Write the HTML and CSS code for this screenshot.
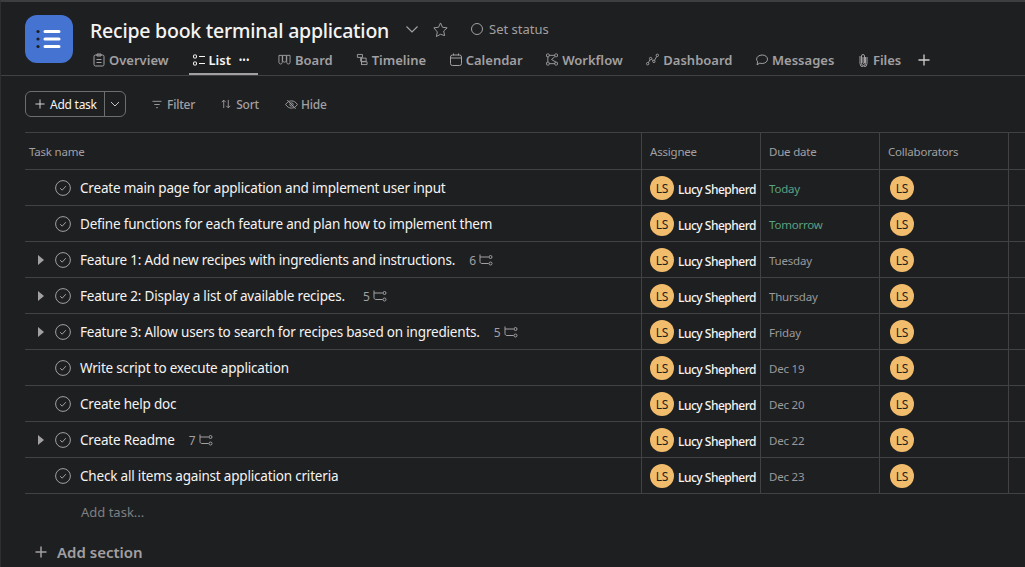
FILE: index.html
```html
<!DOCTYPE html>
<html lang="en">
  <head>
    <meta charset="UTF-8" />
    <meta name="viewport" content="width=device-width, initial-scale=1" />
    <title>Recipe book terminal application</title>
    <link rel="stylesheet" href="styles.css">
  </head>
  <body>
    <svg class="sprites" width="0" height="0" aria-hidden="true">
      <symbol id="i-check" viewBox="0 0 16 16"><circle cx="8" cy="8" r="7.4"/><path d="M5.2 8.2l2 2 3.6-4"/></symbol>
      <symbol id="i-sub" viewBox="0 0 14 12"><path d="M1 .5v7c0 1.300.8 2 2 2h6.600M1 3h8.600"/><circle cx="11.500" cy="3" r="1.500"/><circle cx="11.500" cy="9.500" r="1.500"/></symbol>
      <symbol id="i-plus" viewBox="0 0 12 12"><path d="M6 .5v11M.5 6h11"/></symbol>
    </svg>

    <header class="header">
      <div class="app-icon">
        <svg viewBox="0 0 48 48" width="48" height="48">
          <circle cx="13" cy="16.500" r="1.600" fill="#1e1f21"/>
          <circle cx="13" cy="24" r="1.600" fill="#1e1f21"/>
          <circle cx="13" cy="31.500" r="1.600" fill="#1e1f21"/>
          <path d="M20 16.500h14M20 24h14M20 31.500h14" stroke="#fff" stroke-width="3" stroke-linecap="round"/>
        </svg>
      </div>
      <div class="header-main">
        <div class="title-row">
          <h1 class="title">Recipe book terminal application</h1>
          <svg class="chev" viewBox="0 0 12 7" width="12" height="7"><path d="M.5.5L6 6l5.500-5.500"/></svg>
          <svg class="star" viewBox="0 0 16 16" width="15" height="15"><path d="M8 1l2.100 4.600 5 .6-3.700 3.400 1 4.900L8 13.100l-4.400 2.400 1-4.900L.9 6.200l5-.6z"/></svg>
          <span class="status"><i class="status-dot"></i>Set status</span>
        </div>
        <nav class="tabs">
          <a class="tab">
            <svg viewBox="0 0 12 14" width="12" height="14"><rect x="1" y="2" width="10" height="11" rx="1.500"/><path d="M4 1h4v2H4zM3.500 6.500h5M3.500 9.500h5"/></svg>
            Overview
          </a>
          <a class="tab tab-active">
            <svg viewBox="0 0 12 12" width="12" height="12"><rect x=".5" y="1" width="3" height="3" rx=".5"/><rect x=".5" y="8" width="3" height="3" rx=".5"/><path d="M6 2.500h6M6 9.500h6"/></svg>
            List
            <span class="tab-dots">&bull;&bull;&bull;</span>
          </a>
          <a class="tab tab-board">
            <svg viewBox="0 0 14 12" width="13" height="12"><path d="M1 1h3.600v7.500c0 1-.8 1.800-1.800 1.800S1 9.500 1 8.500zM5 1h4v5.500c0 1-.9 1.800-2 1.800S5 7.500 5 6.500zM9.400 1H13v7.500c0 1-.8 1.800-1.800 1.800s-1.800-.8-1.800-1.800z"/></svg>
            Board
          </a>
          <a class="tab">
            <svg viewBox="0 0 13 13" width="12" height="13"><path d="M1.500 1H7v3.200H1.500zM6 4.500v8M5 5h6v3.500H5zM6 9h6v3H6z"/></svg>
            Timeline
          </a>
          <a class="tab">
            <svg viewBox="0 0 12 13" width="12" height="13"><rect x=".5" y="2" width="11" height="10.500" rx="2"/><path d="M.5 5h11M3.500 .5v2M8.500 .5v2"/></svg>
            Calendar
          </a>
          <a class="tab">
            <svg viewBox="0 0 13 13" width="12" height="13"><rect x=".5" y=".5" width="3" height="3" rx=".8"/><rect x="9.500" y=".5" width="3" height="3" rx=".8"/><rect x=".5" y="9.500" width="3" height="3" rx=".8"/><rect x="9.500" y="9.500" width="3" height="3" rx=".8"/><path d="M3.500 2h6M2 3.500v6M3.500 11h6M9.500 3.500L6 6.500l5 3"/></svg>
            Workflow
          </a>
          <a class="tab">
            <svg viewBox="0 0 14 13" width="13" height="13"><circle cx="1.800" cy="11" r="1.300"/><circle cx="5" cy="5.500" r="1.300"/><circle cx="8.500" cy="8.500" r="1.300"/><circle cx="12.200" cy="2" r="1.300"/><path d="M2.500 10L4.400 6.600M6 6.400l1.500 1.300M9.200 7.400l2.400-4.300"/></svg>
            Dashboard
          </a>
          <a class="tab">
            <svg viewBox="0 0 12 12" width="12" height="12"><path d="M6.200 1C9.200 1 11.500 2.800 11.500 5.200S9.200 9.500 6.200 9.500c-.9 0-1.700-.2-2.400-.4L1 10.800l.7-3C1 7 .6 6.100.6 5.200.6 2.800 3.100 1 6.200 1z"/></svg>
            Messages
          </a>
          <a class="tab">
            <svg class="clip" viewBox="0 0 9 14" width="11" height="14"><path d="M6.500 4v6.500a2 2 0 0 1-4 0V3a1.500 1.500 0 0 1 3 0v7a.8.8 0 0 1-1.500 0V4M8 4v6.500a3.500 3.500 0 0 1-7 0V3"/></svg>
            Files
          </a>
          <svg class="tab-plus"><use href="#i-plus"/></svg>
        </nav>
      </div>
    </header>

    <div class="toolbar">
      <div class="split-btn">
        <span class="split-main"><svg class="plus-sm"><use href="#i-plus"/></svg>Add task</span>
        <span class="split-arrow"><svg viewBox="0 0 10 6" width="10" height="6"><path d="M1 1l4 4 4-4"/></svg></span>
      </div>
      <div class="tools">
        <span class="tool"><svg viewBox="0 0 11 9" width="10" height="9"><path d="M.5 1h10M2.500 4.500h6M4.500 8h2"/></svg>Filter</span>
        <span class="tool"><svg viewBox="0 0 11 10" width="10" height="10"><path d="M3 9.500V.8M.8 3L3 .8 5.200 3M8 .5v8.700M5.800 7L8 9.200 10.200 7"/></svg>Sort</span>
        <span class="tool tool-tight"><svg viewBox="0 0 14 11" width="13" height="11"><path d="M.7 5.500C2.200 3 4.400 1.600 7 1.600s4.800 1.400 6.300 3.900C11.800 8 9.600 9.400 7 9.400S2.200 8 .7 5.500zM2.500 .7l9 9.600"/><circle cx="7" cy="5.500" r="1.800"/></svg>Hide</span>
      </div>
    </div>

    <section class="task-table">
      <div class="row row-head">
        <div class="cell cell-name">Task name</div>
        <div class="cell">Assignee</div>
        <div class="cell">Due date</div>
        <div class="cell">Collaborators</div>
        <div class="cell"></div>
      </div>

      <div class="row">
        <div class="cell cell-name">
          <span class="caret-slot"></span>
          <svg class="check"><use href="#i-check"/></svg>
          <span class="task-title">Create main page for application and implement user input</span>
        </div>
        <div class="cell"><span class="avatar">LS</span><span class="person">Lucy Shepherd</span></div>
        <div class="cell due due-soon">Today</div>
        <div class="cell cell-collab"><span class="avatar">LS</span></div>
        <div class="cell"></div>
      </div>

      <div class="row">
        <div class="cell cell-name">
          <span class="caret-slot"></span>
          <svg class="check"><use href="#i-check"/></svg>
          <span class="task-title">Define functions for each feature and plan how to implement them</span>
        </div>
        <div class="cell"><span class="avatar">LS</span><span class="person">Lucy Shepherd</span></div>
        <div class="cell due due-soon">Tomorrow</div>
        <div class="cell cell-collab"><span class="avatar">LS</span></div>
        <div class="cell"></div>
      </div>

      <div class="row">
        <div class="cell cell-name">
          <span class="caret-slot"><i class="caret"></i></span>
          <svg class="check"><use href="#i-check"/></svg>
          <span class="task-title">Feature 1: Add new recipes with ingredients and instructions.</span>
          <span class="sub-count">6<svg class="sub-icon"><use href="#i-sub"/></svg></span>
        </div>
        <div class="cell"><span class="avatar">LS</span><span class="person">Lucy Shepherd</span></div>
        <div class="cell due">Tuesday</div>
        <div class="cell cell-collab"><span class="avatar">LS</span></div>
        <div class="cell"></div>
      </div>

      <div class="row">
        <div class="cell cell-name">
          <span class="caret-slot"><i class="caret"></i></span>
          <svg class="check"><use href="#i-check"/></svg>
          <span class="task-title">Feature 2: Display a list of available recipes.</span>
          <span class="sub-count sub-count-wide">5<svg class="sub-icon"><use href="#i-sub"/></svg></span>
        </div>
        <div class="cell"><span class="avatar">LS</span><span class="person">Lucy Shepherd</span></div>
        <div class="cell due">Thursday</div>
        <div class="cell cell-collab"><span class="avatar">LS</span></div>
        <div class="cell"></div>
      </div>

      <div class="row">
        <div class="cell cell-name">
          <span class="caret-slot"><i class="caret"></i></span>
          <svg class="check"><use href="#i-check"/></svg>
          <span class="task-title">Feature 3: Allow users to search for recipes based on ingredients.</span>
          <span class="sub-count">5<svg class="sub-icon"><use href="#i-sub"/></svg></span>
        </div>
        <div class="cell"><span class="avatar">LS</span><span class="person">Lucy Shepherd</span></div>
        <div class="cell due">Friday</div>
        <div class="cell cell-collab"><span class="avatar">LS</span></div>
        <div class="cell"></div>
      </div>

      <div class="row">
        <div class="cell cell-name">
          <span class="caret-slot"></span>
          <svg class="check"><use href="#i-check"/></svg>
          <span class="task-title">Write script to execute application</span>
        </div>
        <div class="cell"><span class="avatar">LS</span><span class="person">Lucy Shepherd</span></div>
        <div class="cell due">Dec 19</div>
        <div class="cell cell-collab"><span class="avatar">LS</span></div>
        <div class="cell"></div>
      </div>

      <div class="row">
        <div class="cell cell-name">
          <span class="caret-slot"></span>
          <svg class="check"><use href="#i-check"/></svg>
          <span class="task-title">Create help doc</span>
        </div>
        <div class="cell"><span class="avatar">LS</span><span class="person">Lucy Shepherd</span></div>
        <div class="cell due">Dec 20</div>
        <div class="cell cell-collab"><span class="avatar">LS</span></div>
        <div class="cell"></div>
      </div>

      <div class="row">
        <div class="cell cell-name">
          <span class="caret-slot"><i class="caret"></i></span>
          <svg class="check"><use href="#i-check"/></svg>
          <span class="task-title">Create Readme</span>
          <span class="sub-count">7<svg class="sub-icon"><use href="#i-sub"/></svg></span>
        </div>
        <div class="cell"><span class="avatar">LS</span><span class="person">Lucy Shepherd</span></div>
        <div class="cell due">Dec 22</div>
        <div class="cell cell-collab"><span class="avatar">LS</span></div>
        <div class="cell"></div>
      </div>

      <div class="row">
        <div class="cell cell-name">
          <span class="caret-slot"></span>
          <svg class="check"><use href="#i-check"/></svg>
          <span class="task-title">Check all items against application criteria</span>
        </div>
        <div class="cell"><span class="avatar">LS</span><span class="person">Lucy Shepherd</span></div>
        <div class="cell due">Dec 23</div>
        <div class="cell cell-collab"><span class="avatar">LS</span></div>
        <div class="cell"></div>
      </div>
    </section>

    <div class="add-task">Add task...</div>
    <div class="add-section"><svg class="plus-lg"><use href="#i-plus"/></svg>Add section</div>
  </body>
</html>
```

FILE: styles.css
```css
* {
  box-sizing: border-box;
}
html,
body {
  height: 100%;
}
body {
  margin: 0;
  background: #1e1f21;
  border-top: 2px solid #3d3e40;
  border-left: 1px solid #2e2f31;
  color: #f5f4f3;
  font-family: "Noto Sans", "Open Sans", sans-serif;
  overflow: hidden;
}
svg {
  fill: none;
  stroke: currentColor;
  stroke-width: 1;
  flex: none;
}
.sprites {
  display: block;
}

/* header */
.header {
  display: flex;
  height: 74px;
  padding: 13px 0 0 24px;
  border-bottom: 1px solid #424244;
}
.app-icon {
  width: 48px;
  height: 48px;
  border-radius: 12px;
  background: #4573d2;
}
.app-icon svg {
  stroke: none;
}
.header-main {
  margin-left: 17px;
}
.title-row {
  display: flex;
  align-items: center;
  height: 32px;
}
.title {
  margin: -2px 0 0;
  font-size: 19.5px;
  font-weight: 500;
  letter-spacing: -0.23px;
  color: #f5f4f3;
}
.chev {
  margin: 0 0 4px 17px;
  color: #a2a0a2;
  stroke-width: 1.2;
}
.star {
  margin: 0 0 4px 15px;
  color: #a2a0a2;
}
.status {
  display: flex;
  align-items: center;
  margin: 0 0 4px 23px;
  font-size: 13px;
  color: #a2a0a2;
}
.status-dot {
  width: 12px;
  height: 12px;
  margin-right: 6px;
  border: 1px solid #a2a0a2;
  border-radius: 50%;
}
.tabs {
  display: flex;
  height: 28px;
  padding-left: 3px;
  font-size: 13px;
  font-weight: 600;
  color: #a2a0a2;
}
.tab {
  display: flex;
  align-items: center;
  gap: 4px;
  height: 28px;
  padding-bottom: 3px;
  margin-right: 23.6px;
}
.tab-active {
  margin: 0 20px 0 -3.6px;
  padding: 0 7px 1px 4px;
  border-bottom: 2px solid #a2a0a2;
  color: #f5f4f3;
}
.tab-board {
  margin-right: 23px;
}
.tab-dots {
  width: 12px;
  margin-left: 4px;
  font-size: 8px;
  letter-spacing: 0.6px;
  white-space: nowrap;
}
.tab-plus {
  width: 12px;
  height: 12px;
  margin: 7px 0 0 -7px;
  color: #d0cfcf;
  stroke-width: 1.3;
}

/* toolbar */
.toolbar {
  display: flex;
  align-items: flex-start;
  height: 56px;
  padding: 15px 0 0 24px;
}
.split-btn {
  display: flex;
  width: 101px;
  height: 26px;
  border: 1px solid #6d6e6f;
  border-radius: 6px;
  font-size: 12px;
  color: #f5f4f3;
}
.split-main {
  display: flex;
  align-items: center;
  gap: 5px;
  width: 79px;
  padding-left: 9px;
  border-right: 1px solid #6d6e6f;
  letter-spacing: -0.25px;
}
.split-arrow {
  display: flex;
  flex: 1;
  align-items: center;
  justify-content: center;
  color: #c8c7c7;
}
.plus-sm {
  width: 10px;
  height: 10px;
}
.tools {
  display: flex;
  gap: 26px;
  height: 26px;
  margin-left: 26px;
  font-size: 12px;
  font-weight: 500;
  letter-spacing: -0.2px;
  color: #a2a0a2;
}
.tool {
  display: flex;
  align-items: center;
  gap: 5px;
}
.tool-tight {
  gap: 3px;
}

/* table */
.task-table {
  margin-left: 24px;
  border-top: 1px solid #424244;
}
.row {
  display: grid;
  grid-template-columns: 616px 119px 119px 129px 1fr;
  height: 36px;
  border-bottom: 1px solid #424244;
}
.row-head {
  height: 37px;
  font-size: 11.5px;
  letter-spacing: -0.2px;
  color: #a2a0a2;
}
.cell {
  display: flex;
  align-items: center;
  padding: 1px 0 0 8px;
  border-left: 1px solid #424244;
}
.row-head .cell {
  padding-top: 0;
}
.cell-name {
  padding-left: 4px;
  border-left: 0;
}
.caret-slot {
  display: flex;
  width: 13px;
  margin-left: 9px;
}
.caret {
  width: 0;
  height: 0;
  border-left: 6px solid #a2a0a2;
  border-top: 5px solid transparent;
  border-bottom: 5px solid transparent;
}
.check {
  width: 16px;
  height: 16px;
  margin-left: 4px;
  color: #a2a0a2;
}
.task-title {
  margin-left: 9px;
  font-size: 13.5px;
  letter-spacing: -0.19px;
}
.sub-count {
  display: flex;
  align-items: center;
  gap: 3px;
  margin-left: 14px;
  font-size: 12px;
  color: #a2a0a2;
}
.sub-count-wide {
  margin-left: 18px;
}
.sub-icon {
  width: 14px;
  height: 12px;
}
.avatar {
  display: flex;
  align-items: center;
  justify-content: center;
  width: 24px;
  height: 24px;
  border-radius: 50%;
  background: #f1bd6c;
  color: #1e1f21;
  font-size: 12px;
  letter-spacing: -0.3px;
}
.person {
  margin: 2px 0 0 4px;
  font-size: 12px;
  font-weight: 500;
  letter-spacing: -0.5px;
  white-space: nowrap;
}
.due {
  padding-top: 2px;
  font-size: 11.5px;
  letter-spacing: -0.2px;
  color: #9a999b;
}
.due-soon {
  color: #58a182;
}
.cell-collab {
  padding-left: 10px;
}
.add-task {
  height: 37px;
  padding: 9px 0 0 80px;
  font-size: 13px;
  color: #7f7f81;
}
.add-section {
  display: flex;
  align-items: center;
  gap: 10px;
  padding: 11px 0 0 34px;
  font-size: 15px;
  font-weight: 600;
  color: #a2a0a2;
}
.plus-lg {
  width: 12px;
  height: 12px;
  stroke-width: 1.5;
}
```
